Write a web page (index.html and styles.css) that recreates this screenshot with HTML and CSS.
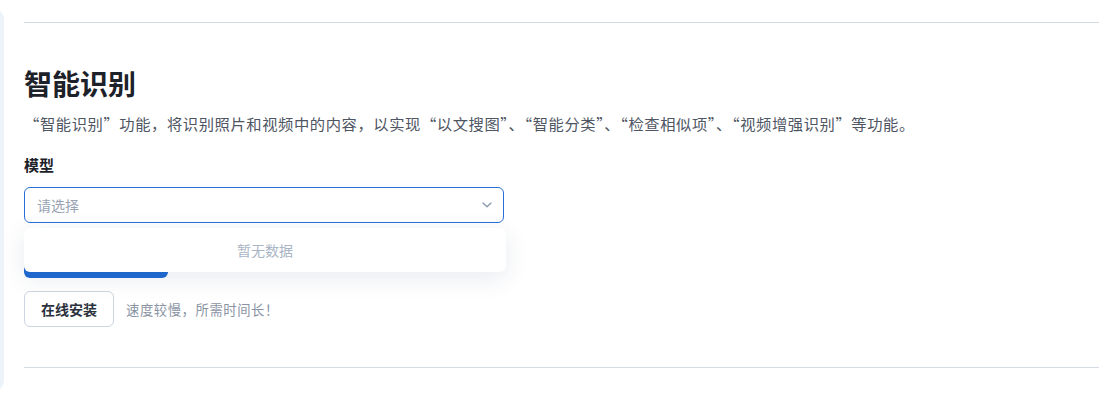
FILE: index.html
```html
<!DOCTYPE html>
<html lang="zh-CN">
<head>
<meta charset="utf-8">
<title>智能识别</title>
<link rel="stylesheet" href="styles.css">
</head>
<body>
<div class="layout">
  <div class="side"></div>
  <main class="main">
    <section class="section">
      <h1 class="title">智能识别</h1>
      <p class="desc">“智能识别”功能，将识别照片和视频中的内容，以实现“以文搜图”、“智能分类”、“检查相似项”、“视频增强识别”等功能。</p>
      <div class="label">模型</div>
      <div class="select-wrap">
        <div class="select">
          <span class="placeholder">请选择</span>
          <svg class="chevron" width="12" height="8" viewBox="0 0 12 8"><path d="M2 2 L6 5.8 L10 2" fill="none" stroke="#8a96ab" stroke-width="1.3" stroke-linecap="round" stroke-linejoin="round"/></svg>
        </div>
        <div class="dropdown">暂无数据</div>
      </div>
      <button class="primary">下载模型</button>
      <div class="install-row">
        <button class="ghost">在线安装</button>
        <span class="hint">速度较慢，所需时间长！</span>
      </div>
    </section>
    <div class="bottom-line"></div>
  </main>
</div>
</body>
</html>
```
FILE: styles.css
```css
* { box-sizing: border-box; }
html, body {
  margin: 0;
  padding: 0;
  background: #ffffff;
  font-family: "Noto Sans CJK SC", "Noto Sans", sans-serif;
}
.layout {
  display: flex;
  align-items: flex-start;
  height: 401px;
  overflow: hidden;
}
.side {
  flex: none;
  width: 24px;
  margin-left: -20px;
  margin-top: 8px;
  height: 384px;
  background: #eef2f9;
  border-radius: 0 12px 12px 0;
}
.main {
  flex: 1;
  padding-left: 20px;
  padding-top: 22px;
}
.section {
  border-top: 1px solid #d3dbe6;
  padding-top: 40px;
  padding-bottom: 40px;
}
.title {
  margin: 0;
  font-size: 28px;
  line-height: 40px;
  font-weight: 700;
  color: #1d2129;
}
.desc {
  margin: 9px 0 0;
  font-size: 15.3px;
  line-height: 22px;
  color: #4e5563;
  letter-spacing: 0.58px;
}
.label {
  margin-top: 20px;
  font-size: 15px;
  line-height: 22px;
  font-weight: 700;
  color: #1d2129;
}
.select-wrap {
  position: relative;
  margin-top: 11px;
  width: 480px;
}
.select {
  height: 36px;
  border: 1px solid #2a6fd8;
  border-radius: 6px;
  display: flex;
  align-items: center;
  justify-content: space-between;
  padding: 0 10px 0 12px;
  background: #fff;
}
.placeholder {
  font-size: 14px;
  color: #9aa3b2;
}
.chevron { display: block; }
.dropdown {
  position: absolute;
  left: 0;
  top: 41px;
  width: 482px;
  height: 44px;
  background: #fff;
  border-radius: 6px;
  box-shadow: 0 6px 24px rgba(30, 50, 90, 0.10);
  display: flex;
  align-items: center;
  justify-content: center;
  font-size: 14px;
  color: #a9b4c4;
  z-index: 2;
}
.primary {
  display: block;
  margin-top: 19px;
  width: 144px;
  height: 36px;
  border: none;
  border-radius: 6px;
  background: #1f6bd3;
  color: #fff;
  font-family: inherit;
  font-size: 13px;
  font-weight: 700;
}
.install-row {
  margin-top: 13px;
  display: flex;
  align-items: center;
  gap: 12px;
}
.ghost {
  width: 90px;
  height: 36px;
  border: 1px solid #ccd5e1;
  border-radius: 6px;
  background: #fff;
  color: #2b313c;
  font-family: inherit;
  font-size: 14px;
  font-weight: 700;
  padding: 0;
}
.hint {
  font-size: 13.3px;
  color: #8a93a3;
  letter-spacing: 0.6px;
}
.bottom-line {
  height: 1px;
  background: #d3dbe6;
}
```
